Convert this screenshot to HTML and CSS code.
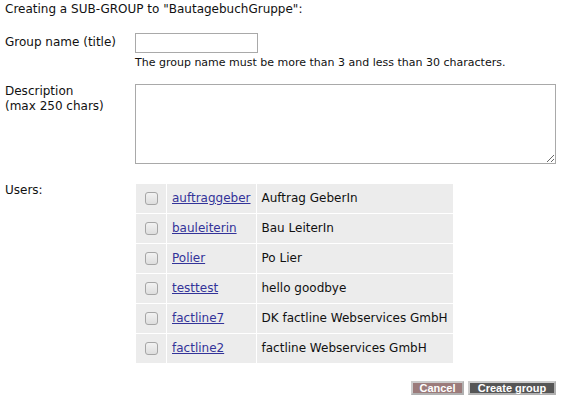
FILE: index.html
```html
<!DOCTYPE html>
<html>
<head>
<meta charset="utf-8">
<link rel="stylesheet" href="styles.css">
</head>
<body>
<div class="page">
  <p class="title">Creating a SUB-GROUP to "BautagebuchGruppe":</p>
  <div class="form">
    <label class="label label-name" for="gname">Group name (title)</label>
    <div class="field">
      <input id="gname" class="text-input" type="text">
      <div class="hint">The group name must be more than 3 and less than 30 characters.</div>
    </div>

    <label class="label label-desc" for="gdesc">Description<br>(max 250 chars)</label>
    <div class="field">
      <textarea id="gdesc" class="desc"></textarea>
    </div>

    <div class="label label-users">Users:</div>
    <div class="field">
      <table class="users">
        <tr><td class="cb"><input type="checkbox"></td><td><a href="#">auftraggeber</a></td><td>Auftrag GeberIn</td></tr>
        <tr><td class="cb"><input type="checkbox"></td><td><a href="#">bauleiterin</a></td><td>Bau LeiterIn</td></tr>
        <tr><td class="cb"><input type="checkbox"></td><td><a href="#">Polier</a></td><td>Po Lier</td></tr>
        <tr><td class="cb"><input type="checkbox"></td><td><a href="#">testtest</a></td><td>hello goodbye</td></tr>
        <tr><td class="cb"><input type="checkbox"></td><td><a href="#">factline7</a></td><td>DK factline Webservices GmbH</td></tr>
        <tr><td class="cb"><input type="checkbox"></td><td><a href="#">factline2</a></td><td>factline Webservices GmbH</td></tr>
      </table>
    </div>
  </div>
  <div class="actions">
    <button class="btn btn-cancel" type="button">Cancel</button>
    <button class="btn btn-create" type="button">Create group</button>
  </div>
</div>
</body>
</html>
```

FILE: styles.css
```css
html, body {
  margin: 0;
  padding: 0;
  background: #fff;
}
body {
  font-family: "DejaVu Sans", Verdana, sans-serif;
  font-size: 12px;
  line-height: 15px;
  color: #111;
}
.page {
  padding: 2px 7px 0 5px;
}
.title {
  margin: 0;
}
.form {
  margin-top: 16px;
  display: grid;
  grid-template-columns: 130px 1fr;
}
.label {
  display: block;
}
.label-name {
  padding-top: 2px;
}
.label-desc {
  margin-top: 14px;
}
.label-users {
  margin-top: 19px;
}
.text-input {
  display: block;
  box-sizing: border-box;
  width: 123px;
  height: 20px;
  margin: 0 0 1px 0;
  border: 1px solid #a9a9a9;
  padding: 1px 3px;
  font: inherit;
}
.hint {
  font-size: 11px;
  line-height: 15px;
  padding-top: 1px;
}
.desc {
  display: block;
  box-sizing: border-box;
  width: 421px;
  height: 80px;
  margin: 14px 0 0 0;
  border: 1px solid #a9a9a9;
  padding: 2px;
  font: inherit;
  resize: both;
}
.users {
  margin-top: 19px;
  border-collapse: separate;
  border-spacing: 1px;
}
.users td {
  background: #ececec;
  height: 29px;
  padding: 0 5px;
  vertical-align: middle;
  white-space: nowrap;
}
.users input[type="checkbox"] {
  -webkit-appearance: none;
  appearance: none;
  display: block;
  box-sizing: border-box;
  margin: 3px 3px 3px 4px;
  width: 13px;
  height: 13px;
  border: 1px solid #a6a6a6;
  border-radius: 3px;
  background: linear-gradient(#f2f2f2, #dedede);
}
.users a {
  color: #333399;
  text-decoration: underline;
}
.actions {
  margin-top: 17px;
  display: flex;
  justify-content: flex-end;
  gap: 4px;
}
.btn {
  font-family: "Liberation Sans", Arial, sans-serif;
  font-weight: bold;
  font-size: 11px;
  line-height: 10px;
  color: #fff;
  height: 14px;
  padding: 0;
  border: 2px solid #cccccc;
  border-right-color: #b0b0b0;
  border-bottom-color: #b0b0b0;
  border-radius: 0;
  cursor: pointer;
}
.btn-cancel {
  width: 53px;
  background: #9b7b7b;
}
.btn-create {
  width: 88px;
  background: #565656;
}
```
